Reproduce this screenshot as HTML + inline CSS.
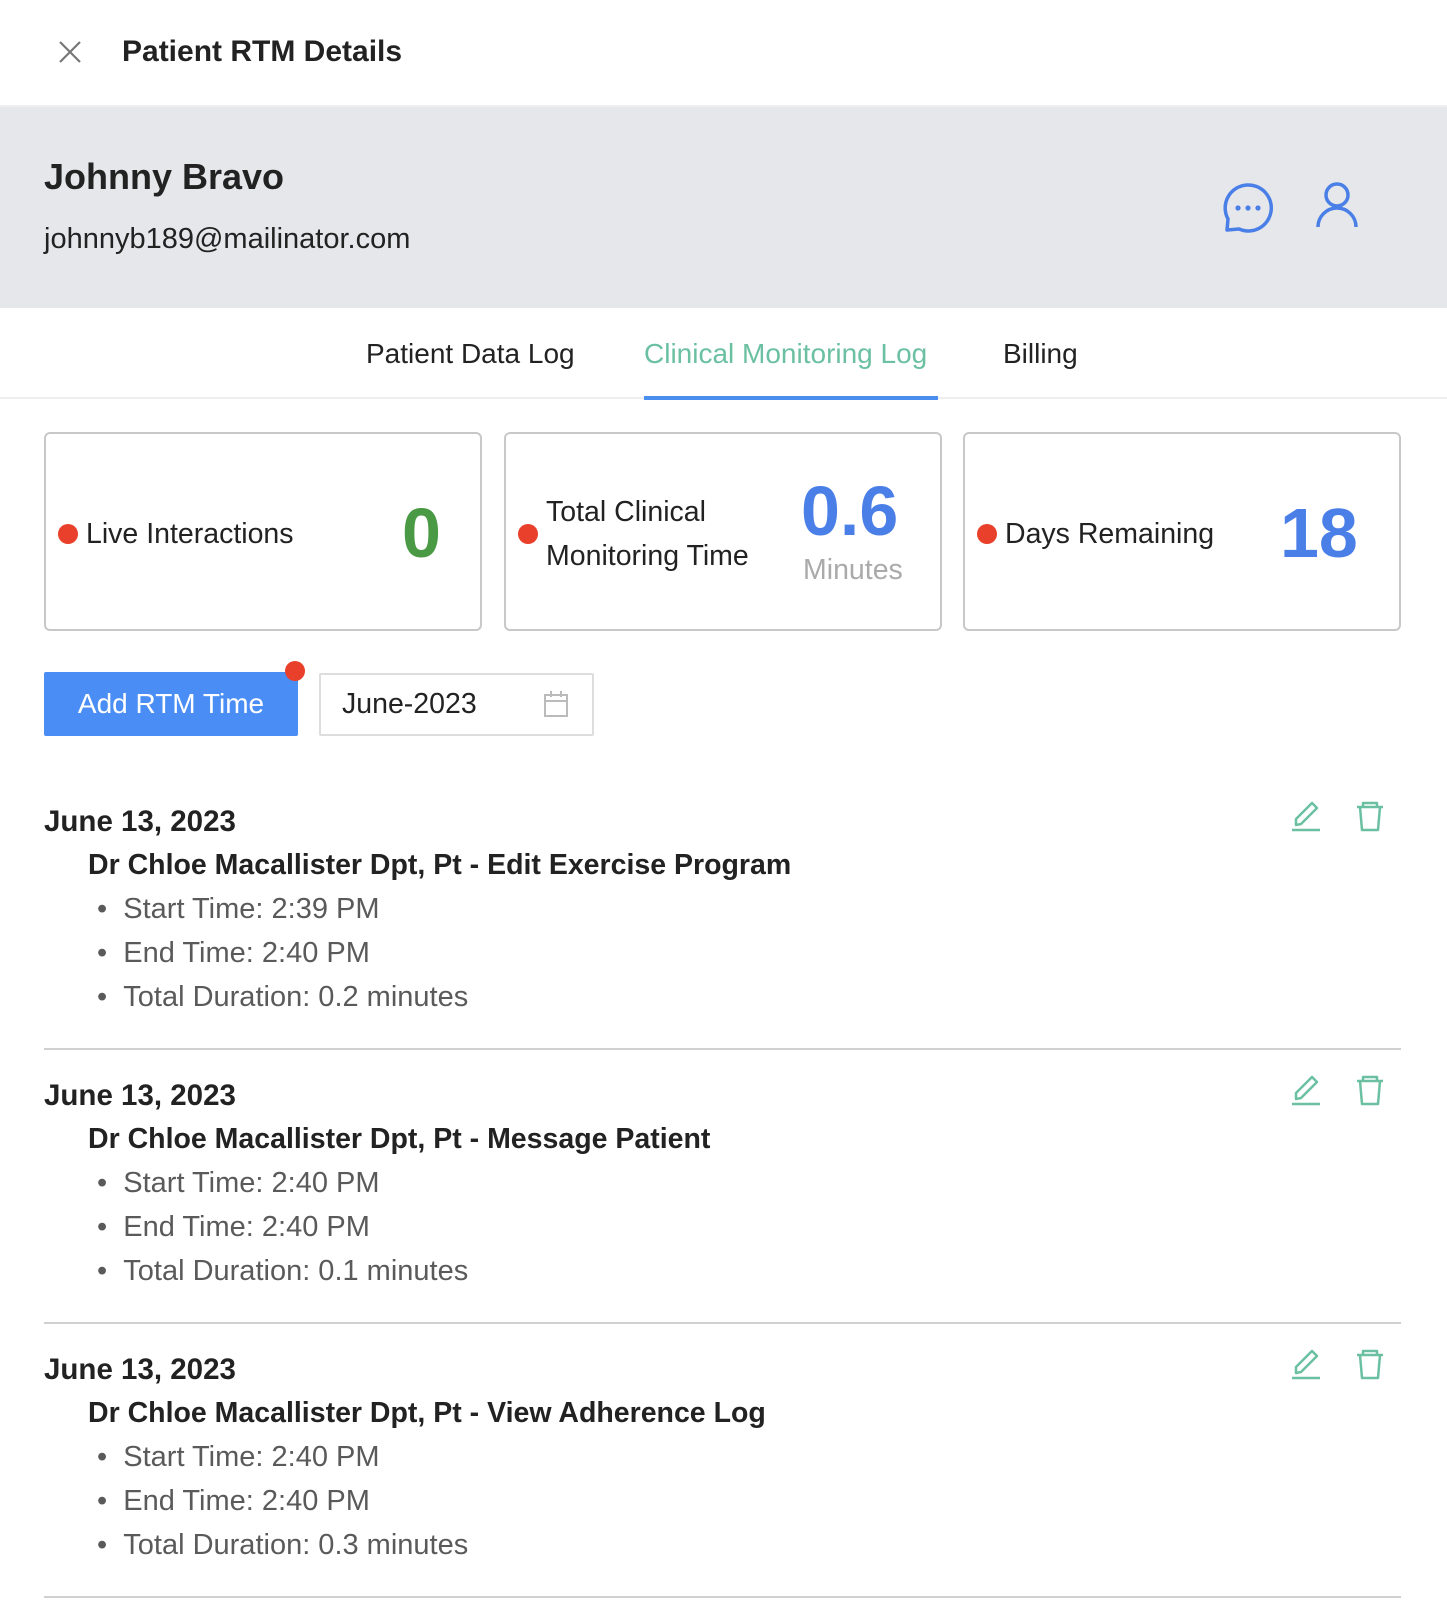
<!DOCTYPE html>
<html><head><meta charset="utf-8"><style>
*{margin:0;padding:0;box-sizing:border-box}
body{width:1447px;height:1616px;background:#fff;font-family:"Liberation Sans",sans-serif;color:#222;position:relative;overflow:hidden}
.abs{position:absolute;white-space:nowrap}
.card{position:absolute;top:432px;height:199px;width:438px;border:2px solid #c8c8c8;border-radius:6px;background:#fff}
.dot{position:absolute;width:20px;height:20px;border-radius:50%;background:#e8402a}
.lbl{position:absolute;font-size:28.5px;color:#222;line-height:44px}
.big{position:absolute;font-size:70px;font-weight:bold;line-height:70px}
.sep{position:absolute;left:44px;width:1357px;height:2px;background:#d0d0d0}
.date{font-size:29.5px;font-weight:bold;color:#222}
.who{font-size:28.5px;font-weight:bold;color:#222}
.li{font-size:29px;color:#5a5a5a}
</style></head><body>
<svg class="abs" style="left:58px;top:40px" width="24" height="24" viewBox="0 0 24 24"><path d="M2 2L22 22M22 2L2 22" stroke="#777" stroke-width="2.2" fill="none"/></svg>
<div class="abs" style="left:122px;top:34px;font-size:30px;font-weight:bold;line-height:36px;color:#222">Patient RTM Details</div>
<div class="abs" style="left:0;top:105px;width:1447px;height:203px;background:#e5e7ea;border-top:2px solid #eeeeef"></div>
<div class="abs" style="left:44px;top:156px;font-size:36px;font-weight:bold;line-height:42px;color:#222">Johnny Bravo</div>
<div class="abs" style="left:44px;top:222px;font-size:29px;line-height:34px;color:#222">johnnyb189@mailinator.com</div>
<svg class="abs" style="left:1220px;top:180px" width="56" height="56" viewBox="0 0 56 56"><path d="M27 5A23 23 0 1 1 19 49L7 50L8 39A23 23 0 0 1 27 5Z" stroke="#4a7fe8" stroke-width="3.5" fill="none" stroke-linejoin="round"/><circle cx="18" cy="28" r="2.6" fill="#4a7fe8"/><circle cx="28" cy="28" r="2.6" fill="#4a7fe8"/><circle cx="38" cy="28" r="2.6" fill="#4a7fe8"/></svg>
<svg class="abs" style="left:1312px;top:180px" width="50" height="50" viewBox="0 0 50 50"><circle cx="25" cy="15" r="11" stroke="#4a7fe8" stroke-width="3.5" fill="none"/><path d="M6 47A19 19 0 0 1 44 47" stroke="#4a7fe8" stroke-width="3.5" fill="none"/></svg>
<div class="abs" style="left:366px;top:336px;font-size:28px;line-height:36px;color:#222">Patient Data Log</div>
<div class="abs" style="left:644px;top:336px;font-size:28px;line-height:36px;color:#6cc0a2">Clinical Monitoring Log</div>
<div class="abs" style="left:1003px;top:336px;font-size:28px;line-height:36px;color:#222">Billing</div>
<div class="abs" style="left:0;top:397px;width:1447px;height:2px;background:#eee"></div>
<div class="abs" style="left:644px;top:396px;width:294px;height:4px;background:#4a8ef0"></div>

<div class="card" style="left:44px"><div class="dot" style="left:12px;top:90px"></div><div class="lbl" style="left:40px;top:78px">Live Interactions</div><div class="big" style="left:356px;top:64px;color:#4a9a45">0</div></div>
<div class="card" style="left:504px"><div class="dot" style="left:12px;top:90px"></div><div class="lbl" style="left:40px;top:56px">Total Clinical<br>Monitoring Time</div><div class="big" style="left:295px;top:42px;color:#4a7fe8">0.6</div><div class="lbl" style="left:297px;top:114px;color:#aaa">Minutes</div></div>
<div class="card" style="left:963px"><div class="dot" style="left:12px;top:90px"></div><div class="lbl" style="left:40px;top:78px">Days Remaining</div><div class="big" style="left:315px;top:64px;color:#4a7fe8">18</div></div>

<div class="abs" style="left:44px;top:672px;width:254px;height:64px;background:#4a8ef5;border-radius:2px;color:#fff;font-size:28px;line-height:64px;text-align:center">Add RTM Time</div>
<div class="dot" style="left:285px;top:661px"></div>
<div class="abs" style="left:319px;top:673px;width:275px;height:63px;border:2px solid #ddd;border-radius:2px"></div>
<div class="abs" style="left:342px;top:686px;font-size:28.5px;line-height:36px;color:#222">June-2023</div>
<svg class="abs" style="left:543px;top:690px" width="26" height="28" viewBox="0 0 26 28"><rect x="2" y="5" width="22" height="21" stroke="#bbb" stroke-width="2" fill="none"/><path d="M2 11H24M8 1V7M18 1V7" stroke="#bbb" stroke-width="2"/></svg>

<div class="abs date" style="left:44px;top:805px">June 13, 2023</div>
<div class="abs who" style="left:88px;top:849px">Dr Chloe Macallister Dpt, Pt - Edit Exercise Program</div>
<div class="abs li" style="left:97px;top:893px">•&nbsp;&nbsp;Start Time: 2:39 PM</div>
<div class="abs li" style="left:97px;top:937px">•&nbsp;&nbsp;End Time: 2:40 PM</div>
<div class="abs li" style="left:97px;top:981px">•&nbsp;&nbsp;Total Duration: 0.2 minutes</div>
<div class="sep" style="top:1048px"></div>

<div class="abs date" style="left:44px;top:1079px">June 13, 2023</div>
<div class="abs who" style="left:88px;top:1123px">Dr Chloe Macallister Dpt, Pt - Message Patient</div>
<div class="abs li" style="left:97px;top:1167px">•&nbsp;&nbsp;Start Time: 2:40 PM</div>
<div class="abs li" style="left:97px;top:1211px">•&nbsp;&nbsp;End Time: 2:40 PM</div>
<div class="abs li" style="left:97px;top:1255px">•&nbsp;&nbsp;Total Duration: 0.1 minutes</div>
<div class="sep" style="top:1322px"></div>

<div class="abs date" style="left:44px;top:1353px">June 13, 2023</div>
<div class="abs who" style="left:88px;top:1397px">Dr Chloe Macallister Dpt, Pt - View Adherence Log</div>
<div class="abs li" style="left:97px;top:1441px">•&nbsp;&nbsp;Start Time: 2:40 PM</div>
<div class="abs li" style="left:97px;top:1485px">•&nbsp;&nbsp;End Time: 2:40 PM</div>
<div class="abs li" style="left:97px;top:1529px">•&nbsp;&nbsp;Total Duration: 0.3 minutes</div>
<div class="sep" style="top:1596px"></div>

<svg class="abs" style="left:1290px;top:800px" width="100" height="34" viewBox="0 0 100 34"><g stroke="#6cc0a2" stroke-width="2.5" fill="none" stroke-linejoin="round"><path d="M6 25L6 19L22 3L27 8L11 24Z"/><path d="M2 30H30"/><path d="M67 7H93M73 7V3H87V7M70 7L72 30H88L90 7"/></g></svg>
<svg class="abs" style="left:1290px;top:1074px" width="100" height="34" viewBox="0 0 100 34"><g stroke="#6cc0a2" stroke-width="2.5" fill="none" stroke-linejoin="round"><path d="M6 25L6 19L22 3L27 8L11 24Z"/><path d="M2 30H30"/><path d="M67 7H93M73 7V3H87V7M70 7L72 30H88L90 7"/></g></svg>
<svg class="abs" style="left:1290px;top:1348px" width="100" height="34" viewBox="0 0 100 34"><g stroke="#6cc0a2" stroke-width="2.5" fill="none" stroke-linejoin="round"><path d="M6 25L6 19L22 3L27 8L11 24Z"/><path d="M2 30H30"/><path d="M67 7H93M73 7V3H87V7M70 7L72 30H88L90 7"/></g></svg>
</body></html>
